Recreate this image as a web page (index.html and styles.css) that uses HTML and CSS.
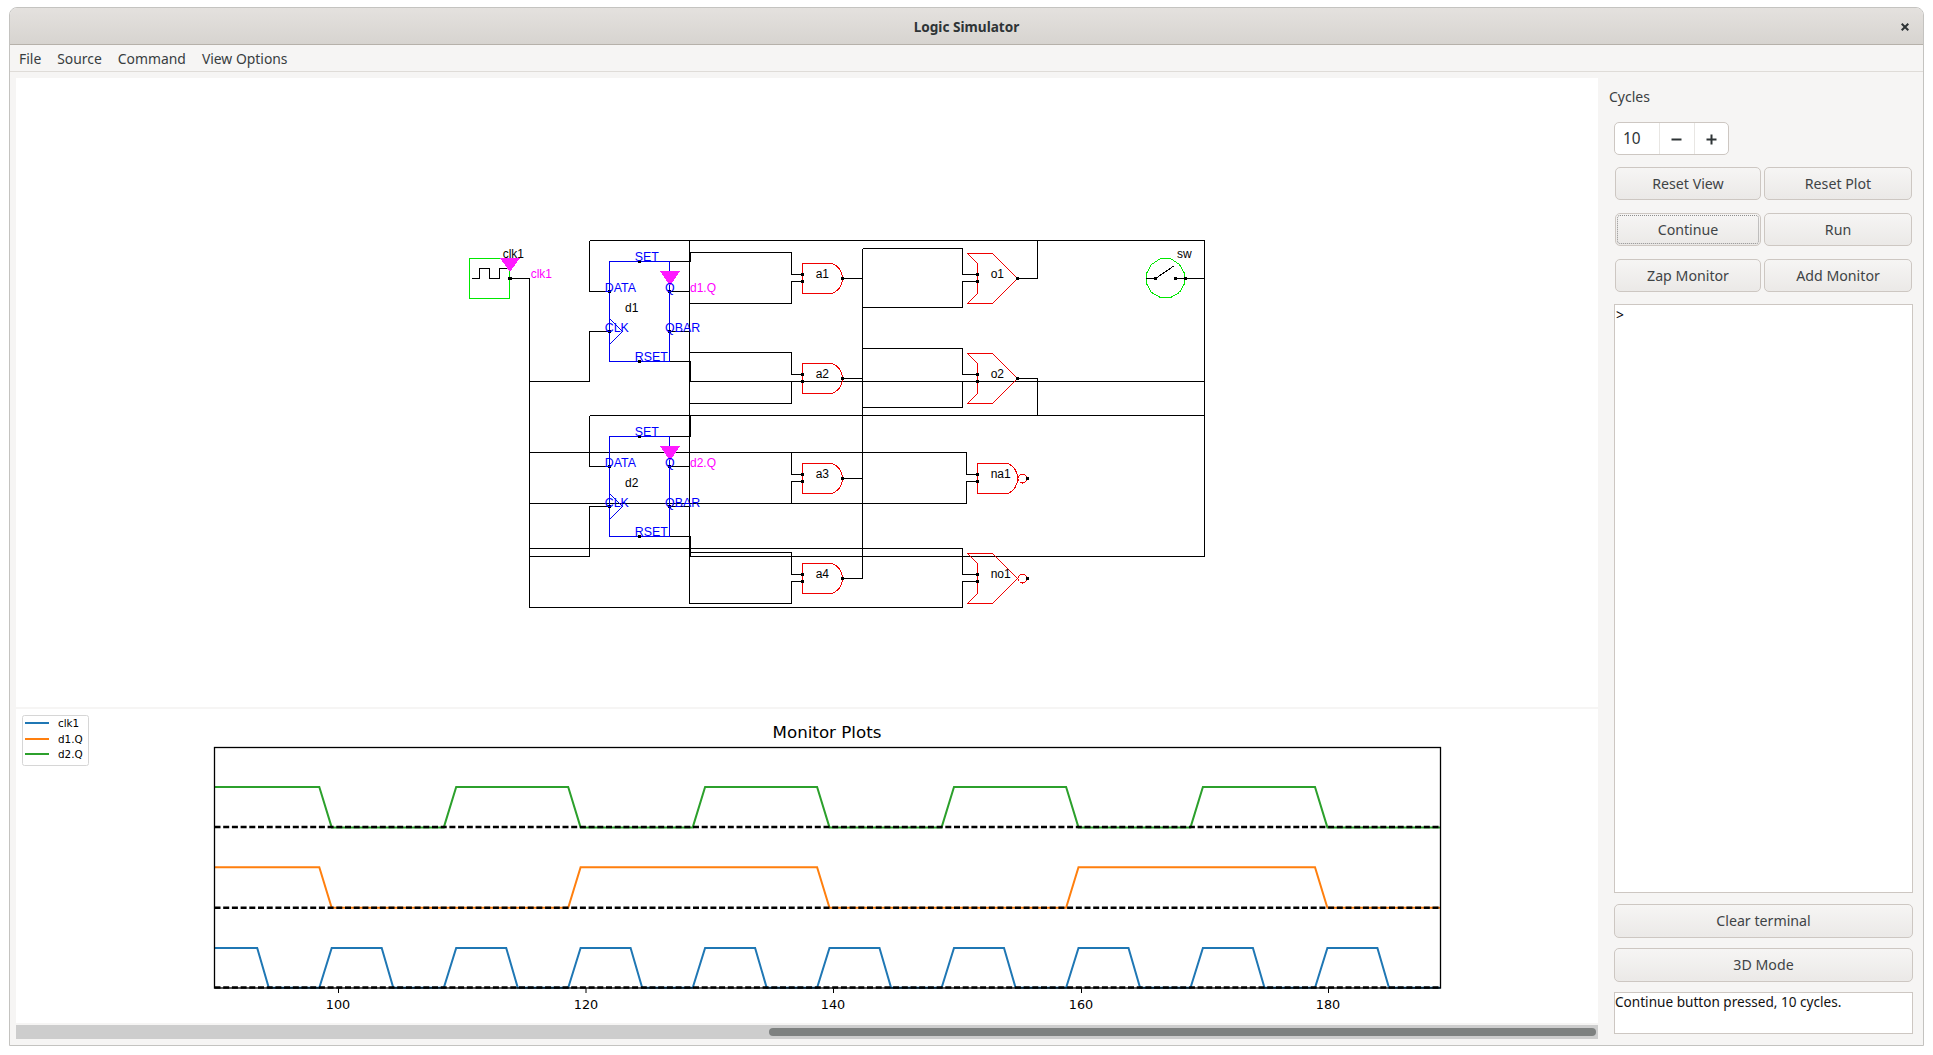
FILE: index.html
```html
<!DOCTYPE html>
<html lang="en">
<head>
<meta charset="utf-8">
<title>Logic Simulator</title>
<link rel="stylesheet" href="styles.css">
</head>
<body>
<div class="window">
  <header class="titlebar">
    <span class="title">Logic Simulator</span>
    <svg class="close" viewBox="0 0 8 8" width="8" height="8"><path d="M.7.7 7.3 7.3M7.3.7.7 7.3"/></svg>
  </header>
  <nav class="menubar">
    <span class="menu-item">File</span>
    <span class="menu-item">Source</span>
    <span class="menu-item">Command</span>
    <span class="menu-item">View Options</span>
  </nav>
  <main class="main">
    <section class="left">
      <div class="canvas">
        <svg class="drawing" viewBox="16 78 1582 629" width="1582" height="629">
          <g transform="translate(.5 .5)">
            <path class="wire" d="M589 240H1204V556H689M589 240V291H609M689 240V603H791V581H802M639 261H690V252H791V274H802M802 281H791V303H689M669 291H689M669 331H689M609 331H589V381H529M509 278H529V607H962V581H977M639 361H690V381H1204M689 352H791V374H802M802 381H791V403H689"/>
            <path class="wire" d="M589 415H1204M589 415V466H609M639 436H690V415M529 452H966V474H977M791 452V474H802M529 503H966V481H977M791 503V481H802M669 466H689M669 506H689M609 506H589V556H529M639 536H690V556M529 548H962V574H977M689 552H791V574H802M802 581H791"/>
            <path class="wire" d="M842 278H862M842 378H862M842 478H862M842 578H862M862 248V577M862 248H962V274H977M977 281H962V307H862M862 348H962V374H977M977 381H962V407H862M1017 278H1037V240M1017 378H1037V415M1185 278H1204"/>
            <g class="dev-green">
              <rect x="469" y="258" width="40" height="40"/>
              <polygon points="1160,258 1170,258 1179,264 1184,273 1184,283 1179,292 1170,297 1160,297 1151,292 1146,283 1146,273 1151,264"/>
            </g>
            <path class="wire" d="M471 278H479V268H489V278H499V268H509M1145 278H1155L1174 265M1175 278H1185"/>
            <g class="dev-blue">
              <rect x="609" y="261" width="60" height="100"/>
              <path d="M609 318 622 331 609 344"/>
              <rect x="609" y="436" width="60" height="100"/>
              <path d="M609 493 622 506 609 519"/>
            </g>
            <g class="dev-red">
              <path d="M802 263H832Q842 268 842 278 842 288 832 293H802Z"/>
              <path d="M802 363H832Q842 368 842 378 842 388 832 393H802Z"/>
              <path d="M802 463H832Q842 468 842 478 842 488 832 493H802Z"/>
              <path d="M802 563H832Q842 568 842 578 842 588 832 593H802Z"/>
              <path d="M967 253H992L1017 278 992 303H967L977 293V263Z"/>
              <path d="M967 353H992L1017 378 992 403H967L977 393V363Z"/>
              <path d="M977 463H1008Q1017 468 1017 478 1017 488 1008 493H977Z"/>
              <path d="M967 553H992L1017 578 992 603H967L977 593V563Z"/>
              <circle cx="1022" cy="478" r="4.5"/>
              <circle cx="1022" cy="578" r="4.5"/>
            </g>
          </g>
          <g class="probes">
            <polygon points="500,258 520,258 510,272"/>
            <polygon points="660,271 680,271 670,286"/>
            <polygon points="660,446 680,446 670,461"/>
          </g>
          <g class="dots">
            <rect x="508" y="277" width="4" height="3"/>
            <rect x="608" y="290" width="3" height="3"/><rect x="668" y="290" width="3" height="3"/><rect x="608" y="330" width="3" height="3"/><rect x="668" y="330" width="3" height="3"/><rect x="638" y="260" width="3" height="3"/><rect x="638" y="360" width="3" height="3"/>
            <rect x="608" y="465" width="3" height="3"/><rect x="668" y="465" width="3" height="3"/><rect x="608" y="505" width="3" height="3"/><rect x="668" y="505" width="3" height="3"/><rect x="638" y="435" width="3" height="3"/><rect x="638" y="535" width="3" height="3"/>
            <rect x="801" y="273" width="3" height="3"/><rect x="801" y="280" width="3" height="3"/><rect x="841" y="277" width="3" height="3"/>
            <rect x="801" y="373" width="3" height="3"/><rect x="801" y="380" width="3" height="3"/><rect x="841" y="377" width="3" height="3"/>
            <rect x="801" y="473" width="3" height="3"/><rect x="801" y="480" width="3" height="3"/><rect x="841" y="477" width="3" height="3"/>
            <rect x="801" y="573" width="3" height="3"/><rect x="801" y="580" width="3" height="3"/><rect x="841" y="577" width="3" height="3"/>
            <rect x="976" y="273" width="3" height="3"/><rect x="976" y="280" width="3" height="3"/><rect x="1016" y="277" width="3" height="3"/>
            <rect x="976" y="373" width="3" height="3"/><rect x="976" y="380" width="3" height="3"/><rect x="1016" y="377" width="3" height="3"/>
            <rect x="976" y="473" width="3" height="3"/><rect x="976" y="480" width="3" height="3"/><rect x="1026" y="477" width="3" height="3"/>
            <rect x="976" y="573" width="3" height="3"/><rect x="976" y="580" width="3" height="3"/><rect x="1026" y="577" width="3" height="3"/>
            <rect x="1154" y="277" width="3" height="3"/><rect x="1174" y="277" width="3" height="3"/><rect x="1184" y="277" width="3" height="3"/>
          </g>
          <g class="lbl">
            <text x="502.7" y="258">clk1</text>
            <text x="625" y="312">d1</text>
            <text x="625" y="487">d2</text>
            <text x="815.7" y="278">a1</text>
            <text x="815.7" y="378">a2</text>
            <text x="815.7" y="478">a3</text>
            <text x="815.7" y="578">a4</text>
            <text x="990.7" y="278">o1</text>
            <text x="990.7" y="378">o2</text>
            <text x="990.7" y="478">na1</text>
            <text x="990.7" y="578">no1</text>
            <text x="1177" y="258">sw</text>
          </g>
          <g class="lbl lbl-blue">
            <text x="634.7" y="261">SET</text><text x="604.7" y="292">DATA</text><text x="665" y="292">Q</text><text x="604.7" y="332">CLK</text><text x="665" y="332">QBAR</text><text x="634.7" y="361">RSET</text>
            <text x="634.7" y="436">SET</text><text x="604.7" y="467">DATA</text><text x="665" y="467">Q</text><text x="604.7" y="507">CLK</text><text x="665" y="507">QBAR</text><text x="634.7" y="536">RSET</text>
          </g>
          <g class="lbl lbl-pink">
            <text x="530.7" y="278">clk1</text>
            <text x="690" y="292">d1.Q</text>
            <text x="690" y="467">d2.Q</text>
          </g>
        </svg>
      </div>
      <div class="plot">
        <svg class="chart" viewBox="16 709 1582 314" width="1582" height="314">
          <text class="chart-title" x="827" y="737.5">Monitor Plots</text>
          <path class="trace trace-clk" d="M214.5 948 L257.2 948 268.8 987.7 319.3 987.7 331.7 948 381.7 948 393.3 987.7 443.8 987.7 456.2 948 506.2 948 517.8 987.7 568.2 987.7 580.6 948 630.6 948 642.2 987.7 692.7 987.7 705.1 948 755.1 948 766.7 987.7 817.1 987.7 829.5 948 879.5 948 891.1 987.7 941.6 987.7 954 948 1004 948 1015.6 987.7 1066.1 987.7 1078.5 948 1128.5 948 1140.1 987.7 1190.5 987.7 1202.9 948 1252.9 948 1264.5 987.7 1315 987.7 1327.4 948 1377.4 948 1389 987.7 1440.5 987.7"/>
          <path class="trace trace-d1" d="M214.5 867.3 L319.3 867.3 331.7 907.8 568.2 907.8 580.6 867.3 817.1 867.3 829.5 907.8 1066.1 907.8 1078.5 867.3 1315 867.3 1327.4 907.8 1440.5 907.8"/>
          <path class="trace trace-d2" d="M214.5 787 L319.3 787 331.7 827.4 443.8 827.4 456.2 787 568.2 787 580.6 827.4 692.7 827.4 705.1 787 817.1 787 829.5 827.4 941.6 827.4 954 787 1066.1 787 1078.5 827.4 1190.5 827.4 1202.9 787 1315 787 1327.4 827.4 1440.5 827.4"/>
          <path class="baseline" d="M214.5 827H1440.5M214.5 907.8H1440.5M214.5 987.4H1440.5"/>
          <rect class="axes" x="214.5" y="747.5" width="1226" height="240.5"/>
          <path class="ticks" d="M338.5 988V993M586 988V993M833.5 988V993M1081.5 988V993M1328.5 988V993"/>
          <g class="tick-labels">
            <text x="338" y="1009">100</text>
            <text x="586" y="1009">120</text>
            <text x="833" y="1009">140</text>
            <text x="1081" y="1009">160</text>
            <text x="1328" y="1009">180</text>
          </g>
          <rect class="legend-box" x="22.5" y="715.5" width="66" height="50" rx="2"/>
          <path class="trace trace-clk" d="M25 723H49"/>
          <path class="trace trace-d1" d="M25 739H49"/>
          <path class="trace trace-d2" d="M25 754H49"/>
          <g class="legend-text">
            <text x="58" y="727">clk1</text>
            <text x="58" y="743">d1.Q</text>
            <text x="58" y="758">d2.Q</text>
          </g>
        </svg>
      </div>
      <div class="scrollbar"><div class="thumb"></div></div>
    </section>
    <aside class="side">
      <div class="side-label">Cycles</div>
      <div class="spin">
        <span class="spin-value">10</span>
        <span class="spin-btn"><svg viewBox="0 0 11 11" width="11" height="11"><path d="M.5 5.5H10.5"/></svg></span>
        <span class="spin-btn"><svg viewBox="0 0 11 11" width="11" height="11"><path d="M.5 5.5H10.5M5.5.5V10.5"/></svg></span>
      </div>
      <div class="btn-grid">
        <button class="btn">Reset View</button>
        <button class="btn">Reset Plot</button>
        <button class="btn btn-focus">Continue</button>
        <button class="btn">Run</button>
        <button class="btn">Zap Monitor</button>
        <button class="btn">Add Monitor</button>
      </div>
      <div class="terminal">&gt;</div>
      <button class="btn btn-wide btn-clear">Clear terminal</button>
      <button class="btn btn-wide btn-3d">3D Mode</button>
      <div class="status">Continue button pressed, 10 cycles.</div>
    </aside>
  </main>
</div>
</body>
</html>
```
FILE: styles.css
```css
* { box-sizing: border-box; }
html, body { margin: 0; height: 100%; background: #fff; overflow: hidden; }
body { padding: 7px 9px 9px; font: 13.9px "Noto Sans", sans-serif; color: #2e3436; }

.window {
  height: 1039px;
  display: flex;
  flex-direction: column;
  background: #f6f5f4;
  border: 1px solid #c4c3c0;
  border-radius: 8px 8px 0 0;
}
.titlebar {
  height: 37px;
  flex: none;
  display: flex;
  align-items: center;
  justify-content: center;
  position: relative;
  background: linear-gradient(#e4e1de, #d7d4d0);
  border-bottom: 1px solid #b6b1aa;
  border-radius: 7px 7px 0 0;
}
.title { font-weight: 700; font-size: 13.6px; color: #2e3436; }
.close { position: absolute; right: 14px; top: 15px; }
.close path { fill: none; stroke: #2e3436; stroke-width: 2; }

.menubar {
  height: 27px;
  flex: none;
  display: flex;
  align-items: center;
  padding: 0 0 0 9px;
  gap: 16px;
  border-bottom: 1px solid #dfdcd8;
}
.menu-item { color: #383d3f; }

.main { flex: 1; display: flex; min-height: 0; }
.left {
  width: 1588px;
  flex: none;
  display: flex;
  flex-direction: column;
  gap: 2px;
  padding: 6px 0 6px 6px;
}
.canvas { height: 629px; background: #fff; }
.plot { height: 314px; background: #fff; }
.drawing, .chart { display: block; }

.wire { fill: none; stroke: #000; stroke-width: 1; shape-rendering: crispEdges; }
.dev-green rect, .dev-green polygon { fill: none; stroke: #00e800; stroke-width: 1; shape-rendering: crispEdges; }
.dev-blue rect, .dev-blue path { fill: none; stroke: #0000f0; stroke-width: 1; shape-rendering: crispEdges; }
.dev-red path, .dev-red circle { fill: none; stroke: #f00000; stroke-width: 1; shape-rendering: crispEdges; }
.probes polygon { fill: #ff1aff; shape-rendering: crispEdges; }
.dots rect { fill: #000; shape-rendering: crispEdges; }
.lbl text { font: 12px "Liberation Sans", sans-serif; fill: #000; }
.lbl-blue text { font-size: 12.4px; fill: #0000ff; }
.lbl-pink text { fill: #ff00ff; }

.trace { fill: none; stroke-width: 2; }
.trace-clk { stroke: #1f77b4; }
.trace-d1 { stroke: #ff7f0e; }
.trace-d2 { stroke: #2ca02c; }
.baseline { fill: none; stroke: #000; stroke-width: 2.5; stroke-dasharray: 6 2.7; }
.axes { fill: none; stroke: #000; stroke-width: 1.3; }
.ticks { fill: none; stroke: #000; stroke-width: 1; }
.chart-title { font: 16.7px "DejaVu Sans", sans-serif; text-anchor: middle; fill: #000; }
.tick-labels text { font: 12.8px "DejaVu Sans", sans-serif; text-anchor: middle; fill: #000; }
.legend-box { fill: #fff; fill-opacity: .8; stroke: #d6d6d6; stroke-width: 1; }
.legend-text text { font: 10.4px "DejaVu Sans", sans-serif; fill: #000; }

.scrollbar {
  height: 14px;
  display: flex;
  align-items: center;
  justify-content: flex-end;
  padding-right: 2px;
  background: #cdcdcd;
}
.thumb { width: 827px; height: 8px; border-radius: 4px; background: #7e8180; }

.side {
  flex: 1;
  min-width: 0;
  display: flex;
  flex-direction: column;
  padding: 15px 10px 11px 16px;
}
.side-label { height: 20px; line-height: 20px; margin-left: -5px; color: #3b4042; font-size: 14px; }
.spin {
  width: 115px;
  height: 33px;
  margin-top: 15px;
  display: flex;
  background: #fff;
  border: 1px solid #cdc7c2;
  border-radius: 5px;
}
.spin-value { width: 44px; padding-left: 8px; line-height: 32px; font-size: 15.4px; }
.spin-btn {
  flex: 1;
  display: flex;
  align-items: center;
  justify-content: center;
  padding-top: 1px;
  border-left: 1px solid #e8e6e3;
}
.spin-btn path { fill: none; stroke: #2e3436; stroke-width: 2; }
.btn-grid {
  display: grid;
  grid-template-columns: 146px 148px;
  grid-auto-rows: 33px;
  column-gap: 3px;
  row-gap: 13px;
  margin: 12px 0 0 1px;
}
.btn {
  font: inherit;
  font-size: 14.2px;
  color: #3f4446;
  padding: 0;
  background: linear-gradient(#f6f5f4, #ebe9e7);
  border: 1px solid #cdc7c2;
  border-radius: 5px;
}
.btn-focus { outline: 1px dotted #8e8e8e; outline-offset: -3px; }
.btn-wide { flex: none; height: 34px; padding-bottom: 2px; }
.btn-clear { margin-top: 11px; }
.btn-3d { margin-top: 10px; }
.terminal {
  flex: 1;
  margin-top: 12px;
  padding: 0 1px;
  line-height: 20px;
  background: #fff;
  border: 1px solid #cdc7c2;
  color: #000;
}
.status {
  height: 42px;
  margin-top: 10px;
  padding: 0;
  font-size: 13.6px;
  line-height: 18px;
  background: #fff;
  border: 1px solid #cdc7c2;
  color: #111;
}
```
